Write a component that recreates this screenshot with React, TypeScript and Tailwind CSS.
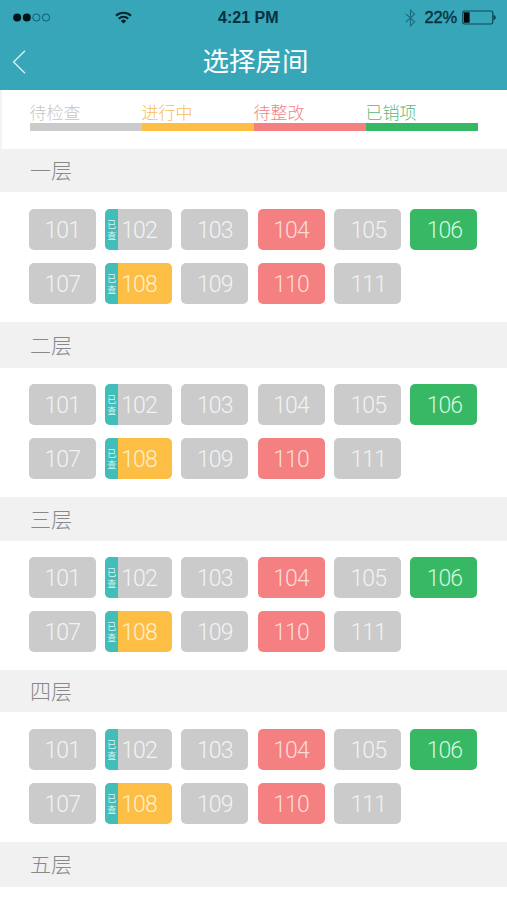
import { clsx } from 'clsx'

type Status = 'pending' | 'progress' | 'rectify' | 'done'

interface Room {
  id: number
  status: Status
  checked?: boolean
}

const statusBg: Record<Status, string> = {
  pending: 'bg-[#cbcbcb]',
  progress: 'bg-[#fdbe45]',
  rectify: 'bg-[#f48082]',
  done: 'bg-[#37b865]',
}

const numberColor: Record<Status, string> = {
  pending: 'text-[#f3f3f3]',
  progress: 'text-[#fff0cc]',
  rectify: 'text-[#fddcd8]',
  done: 'text-[#d5f7dc]',
}

const legend: { label: string; status: Status; text: string }[] = [
  { label: '待检查', status: 'pending', text: 'text-[#c6c6c6]' },
  { label: '进行中', status: 'progress', text: 'text-[#f7bd57]' },
  { label: '待整改', status: 'rectify', text: 'text-[#f08588]' },
  { label: '已销项', status: 'done', text: 'text-[#55b97a]' },
]

const buildRooms = (status104: Status): Room[] => [
  { id: 101, status: 'pending' },
  { id: 102, status: 'pending', checked: true },
  { id: 103, status: 'pending' },
  { id: 104, status: status104 },
  { id: 105, status: 'pending' },
  { id: 106, status: 'done' },
  { id: 107, status: 'pending' },
  { id: 108, status: 'progress', checked: true },
  { id: 109, status: 'pending' },
  { id: 110, status: 'rectify' },
  { id: 111, status: 'pending' },
]

const floors = [
  { name: '一层', rooms: buildRooms('rectify'), head: 'h-[43px]', body: 'h-[130px] pt-[17px]' },
  { name: '二层', rooms: buildRooms('pending'), head: 'h-[46px]', body: 'h-[129px] pt-[16px]' },
  { name: '三层', rooms: buildRooms('rectify'), head: 'h-[44px]', body: 'h-[129px] pt-[16px]' },
  { name: '四层', rooms: buildRooms('rectify'), head: 'h-[42px]', body: 'h-[130px] pt-[17px]' },
  { name: '五层', rooms: [], head: 'h-[45px]', body: 'h-[13px]' },
]

function StatusBar() {
  return (
    <div className="grid h-[35px] grid-cols-3 items-center font-['Liberation_Sans',sans-serif] text-[#06303c]">
      <div className="flex items-center pl-[13px]">
        <svg width="38" height="10" viewBox="0 0 38 10">
          <circle cx="4.2" cy="4.5" r="4" fill="#02141a" />
          <circle cx="13.8" cy="4.5" r="4" fill="#02141a" />
          <circle cx="23.4" cy="4.5" r="3.6" fill="none" stroke="#0d5566" strokeWidth="0.9" />
          <circle cx="33" cy="4.5" r="3.6" fill="none" stroke="#0d5566" strokeWidth="0.9" />
        </svg>
        <svg className="ml-[64px]" width="17" height="13" viewBox="0 0 17 13" fill="none" stroke="#04222b" strokeWidth="2">
          <path d="M1 4.8 A10.8 10.8 0 0 1 16 4.8" />
          <path d="M3.8 7.8 A6.7 6.7 0 0 1 13.2 7.8" />
          <path d="M8.5 12.6 L5.8 9.9 A3.9 3.9 0 0 1 11.2 9.9 Z" fill="#04222b" stroke="none" />
        </svg>
      </div>
      <div className="pl-[49px] text-[16px] leading-none font-bold whitespace-nowrap">4:21 PM</div>
      <div className="flex items-center justify-end pr-[11px]">
        <svg width="11" height="18" viewBox="0 0 11 18" fill="none" stroke="#1b6b7c" strokeWidth="1.1">
          <path d="M0.8 4.8 L9.6 12.8 L5.5 16.8 V1.2 L9.6 5.2 L0.8 13.2" />
        </svg>
        <span className="ml-[9px] text-[16.5px] leading-none tracking-[-0.2px] [-webkit-text-stroke:0.35px_#06303c]">22%</span>
        <svg className="ml-[5px]" width="34" height="15" viewBox="0 0 34 15">
          <rect x="0.8" y="1" width="30" height="13" rx="1.8" fill="none" stroke="#0b4555" strokeWidth="1.2" />
          <rect x="2" y="2.3" width="5.6" height="10.4" fill="#01090c" />
          <path d="M31.5 4.8 Q33.8 5.4 33.8 7.5 Q33.8 9.6 31.5 10.2 Z" fill="#0b4555" />
        </svg>
      </div>
    </div>
  )
}

function Header() {
  return (
    <header className="h-[90px] bg-[#36a6b8]">
      <StatusBar />
      <div className="grid h-[50px] grid-cols-[1fr_auto_1fr] items-center text-white">
        <button className="pt-[4px] pl-[12px]" aria-label="返回">
          <svg width="14" height="24" viewBox="0 0 14 24" fill="none" stroke="#d8f5f8" strokeWidth="1.3">
            <path d="M13 0.8 L1.6 12 L13 23.2" />
          </svg>
        </button>
        <h1 className="pl-[4px] text-[26.5px] leading-none">选择房间</h1>
        <span />
      </div>
    </header>
  )
}

function RoomTile({ room }: { room: Room }) {
  const shifted = [105, 106, 111].includes(room.id)

  return (
    <button
      className={clsx(
        'flex h-[41px] overflow-hidden rounded-[5px]',
        statusBg[room.status],
        numberColor[room.status],
      )}
    >
      {room.checked && (
        <span className="flex h-full w-[13px] shrink-0 items-center justify-center bg-[#41bdba] text-[#d5f6f3]">
          <span className="w-[9px] text-[9px] leading-[11px] break-all">已查</span>
        </span>
      )}
      <span
        className={clsx(
          "pt-[10px] font-['Roboto','Liberation_Sans',sans-serif] text-[23px] leading-[24px] font-light tracking-[-0.9px]",
          room.checked ? 'pl-[3px]' : shifted ? 'pl-[16.5px]' : 'pl-[15.5px]',
        )}
      >
        {room.id}
      </span>
    </button>
  )
}

export default function App() {
  return (
    <main className="h-[900px] w-[507px] overflow-hidden bg-white font-['Noto_Sans_CJK_SC',sans-serif]">
      <Header />
      <div className="grid h-[59px] grid-cols-4 border-l-2 border-[#f4f4f4] pt-[12px] pr-[29.5px] pl-[27.5px]">
        {legend.map((item) => (
          <div key={item.label}>
            <div className={clsx('h-[20.5px] text-[17px] leading-[19px] font-light', item.text)}>{item.label}</div>
            <div className={clsx('h-[8px]', statusBg[item.status])} />
          </div>
        ))}
      </div>
      {floors.map((floor) => (
        <section key={floor.name}>
          <h2 className={clsx('flex items-center bg-[#f1f1f1] pb-[2px] pl-[30px] text-[21px] leading-none font-light text-[#888888]', floor.head)}>
            {floor.name}
          </h2>
          <div className={clsx('grid grid-cols-6 content-start gap-x-[9.4px] gap-y-[13px] pr-[30px] pl-[29px]', floor.body)}>
            {floor.rooms.map((room) => (
              <RoomTile key={room.id} room={room} />
            ))}
          </div>
        </section>
      ))}
    </main>
  )
}
